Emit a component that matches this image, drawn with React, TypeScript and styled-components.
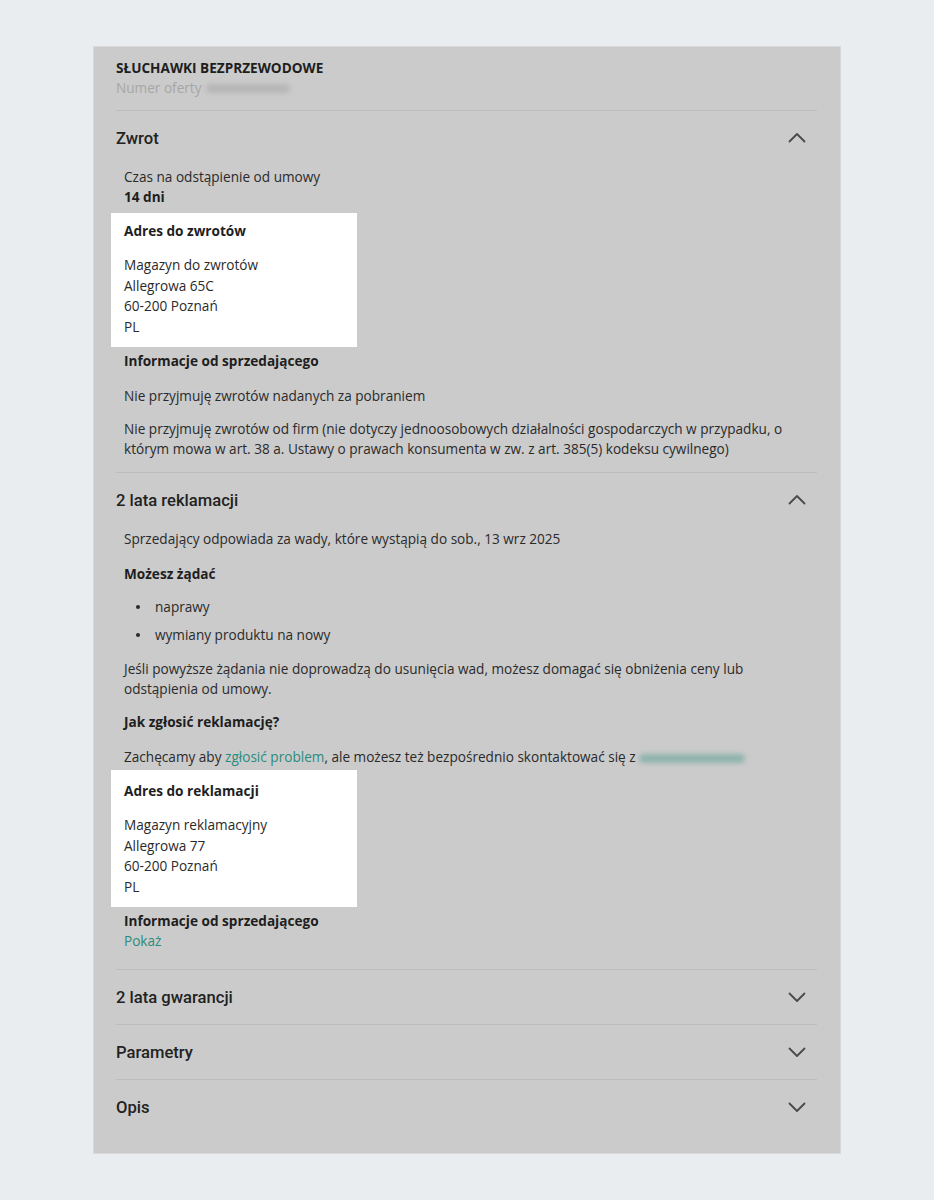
import React from "react";
import styled, { createGlobalStyle } from "styled-components";

const Global = createGlobalStyle`
  html, body { margin: 0; padding: 0; background: #e9edf0; }
  body { font-family: "Open Sans", "Liberation Sans", sans-serif; }
  * { box-sizing: border-box; }
`;

const Page = styled.div`
  padding: 46px 0 40px;
  display: flex;
  justify-content: center;
`;

const Panel = styled.div`
  width: 748px;
  background: #cbcbcb;
  border: 1px solid #d8d8d8;
  padding: 11px 23px 19px 22px;
`;

const Header = styled.div`
  padding-bottom: 12px;
  border-bottom: 1px solid #bdbdbd;
`;

const Title = styled.div`
  font-size: 13.6px;
  font-weight: 700;
  line-height: 20px;
  color: #1e1e1e;
`;

const OfferNo = styled.div`
  font-size: 13.6px;
  line-height: 20px;
  color: #a6a6a6;
  display: flex;
  align-items: center;
  gap: 5px;
`;

const Blur = styled.span<{ $color: string; $w: number }>`
  display: inline-block;
  width: ${(p) => p.$w}px;
  height: 9px;
  border-radius: 5px;
  background: ${(p) => p.$color};
  filter: blur(2.5px);
  vertical-align: middle;
`;

const Section = styled.div<{ $last?: boolean }>`
  border-bottom: ${(p) => (p.$last ? "none" : "1px solid #bdbdbd")};
`;

const SectionHead = styled.div`
  height: 54px;
  display: flex;
  align-items: center;
  justify-content: space-between;
  padding-right: 8px;
`;

const SectionTitle = styled.div`
  font-family: Roboto, "Liberation Sans", sans-serif;
  font-size: 16.6px;
  font-weight: 500;
  color: #222;
`;

const Body = styled.div<{ $pb: number }>`
  padding: 2px 0 ${(p) => p.$pb}px 8px;
  font-size: 13.6px;
  line-height: 20px;
  color: #2a2a2a;
`;

const Line = styled.div<{ $mt?: number; $bold?: boolean }>`
  margin-top: ${(p) => p.$mt ?? 0}px;
  font-weight: ${(p) => (p.$bold ? 700 : 400)};
  color: ${(p) => (p.$bold ? "#1e1e1e" : "#2a2a2a")};
`;

const AddressBox = styled.div<{ $mt: number; $pt: number }>`
  width: 246px;
  margin: ${(p) => p.$mt}px 0 0 -13px;
  padding: ${(p) => p.$pt}px 13px 10px;
  background: #ffffff;
  line-height: 20.5px;
`;

const AddressTitle = styled.div`
  font-weight: 700;
  color: #1e1e1e;
  line-height: 20px;
  margin-bottom: 14px;
`;

const List = styled.ul`
  margin: 13px 0 0;
  padding: 0 0 0 31px;
  list-style: none;
`;

const Item = styled.li`
  position: relative;
  & + & { margin-top: 8px; }
  &::before {
    content: "";
    position: absolute;
    left: -19px;
    top: 8px;
    width: 4px;
    height: 4px;
    border-radius: 50%;
    background: #2a2a2a;
  }
`;

const Link = styled.a`
  color: #2b8b7c;
  text-decoration: none;
`;

const Chevron = ({ up }: { up?: boolean }) => (
  <svg width="24" height="24" viewBox="0 0 24 24" fill="none">
    <path
      d={up ? "M4.5 15.5L12 8l7.5 7.5" : "M4.5 8.5L12 16l7.5-7.5"}
      stroke="#4a4a4a"
      strokeWidth="1.8"
      strokeLinecap="round"
      strokeLinejoin="round"
    />
  </svg>
);

export default function App() {
  return (
    <>
      <Global />
      <Page>
        <Panel>
          <Header>
            <Title>SŁUCHAWKI BEZPRZEWODOWE</Title>
            <OfferNo>
              Numer oferty <Blur $color="#b6b6b6" $w={84} />
            </OfferNo>
          </Header>

          <Section>
            <SectionHead>
              <SectionTitle>Zwrot</SectionTitle>
              <Chevron up />
            </SectionHead>
            <Body $pb={13}>
              <Line>Czas na odstąpienie od umowy</Line>
              <Line $bold>14 dni</Line>
              <AddressBox $mt={6} $pt={8}>
                <AddressTitle>Adres do zwrotów</AddressTitle>
                <div>Magazyn do zwrotów</div>
                <div>Allegrowa 65C</div>
                <div>60-200 Poznań</div>
                <div>PL</div>
              </AddressBox>
              <Line $bold $mt={4}>Informacje od sprzedającego</Line>
              <Line $mt={15}>Nie przyjmuję zwrotów nadanych za pobraniem</Line>
              <Line $mt={13}>
                Nie przyjmuję zwrotów od firm (nie dotyczy jednoosobowych działalności gospodarczych w przypadku, o
                którym mowa w art. 38 a. Ustawy o prawach konsumenta w zw. z art. 385(5) kodeksu cywilnego)
              </Line>
            </Body>
          </Section>

          <Section>
            <SectionHead>
              <SectionTitle>2 lata reklamacji</SectionTitle>
              <Chevron up />
            </SectionHead>
            <Body $pb={18}>
              <Line>Sprzedający odpowiada za wady, które wystąpią do sob., 13 wrz 2025</Line>
              <Line $bold $mt={15}>Możesz żądać</Line>
              <List>
                <Item>naprawy</Item>
                <Item>wymiany produktu na nowy</Item>
              </List>
              <Line $mt={14}>
                Jeśli powyższe żądania nie doprowadzą do usunięcia wad, możesz domagać się obniżenia ceny lub
                odstąpienia od umowy.
              </Line>
              <Line $bold $mt={13}>Jak zgłosić reklamację?</Line>
              <Line $mt={15}>
                Zachęcamy aby <Link href="#">zgłosić problem</Link>, ale możesz też bezpośrednio skontaktować się z{" "}
                <Blur $color="#8fb3ac" $w={106} />
              </Line>
              <AddressBox $mt={3} $pt={11}>
                <AddressTitle>Adres do reklamacji</AddressTitle>
                <div>Magazyn reklamacyjny</div>
                <div>Allegrowa 77</div>
                <div>60-200 Poznań</div>
                <div>PL</div>
              </AddressBox>
              <Line $bold $mt={4}>Informacje od sprzedającego</Line>
              <Line>
                <Link href="#">Pokaż</Link>
              </Line>
            </Body>
          </Section>

          <Section>
            <SectionHead>
              <SectionTitle>2 lata gwarancji</SectionTitle>
              <Chevron />
            </SectionHead>
          </Section>
          <Section>
            <SectionHead>
              <SectionTitle>Parametry</SectionTitle>
              <Chevron />
            </SectionHead>
          </Section>
          <Section $last>
            <SectionHead>
              <SectionTitle>Opis</SectionTitle>
              <Chevron />
            </SectionHead>
          </Section>
        </Panel>
      </Page>
    </>
  );
}
